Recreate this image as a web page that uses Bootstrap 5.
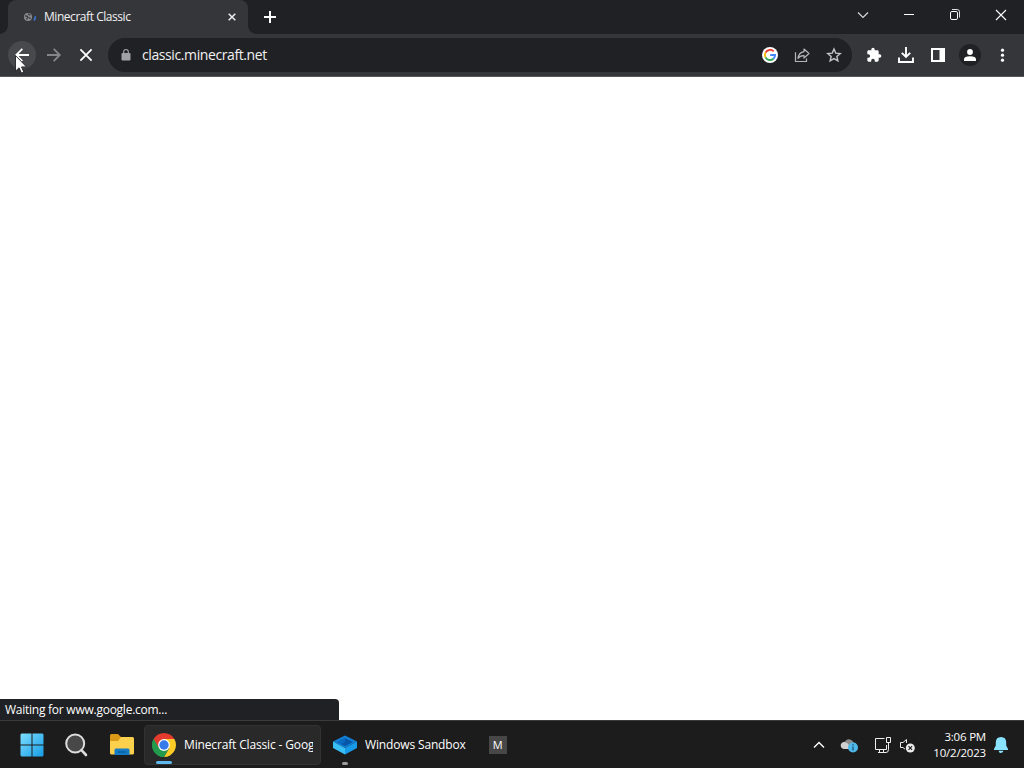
<!DOCTYPE html>
<html lang="en">
<head>
<meta charset="utf-8">
<title>Minecraft Classic</title>
<link href="https://cdn.jsdelivr.net/npm/bootstrap@5.3.0/dist/css/bootstrap.min.css" rel="stylesheet">
<style>
body{width:1024px;height:768px;overflow:hidden;font-family:"Open Sans","Noto Sans",sans-serif;font-size:12px;line-height:16px;color:#fff;background:#fff}
svg{display:block;flex:none;overflow:visible}
.strip{height:34px;background:#202124;padding-left:8px}
.tab{width:240px;height:34px;background:#35363a;border-radius:8px 8px 0 0}
.tab::before,.tab::after{content:"";position:absolute;bottom:0;width:8px;height:8px}
.tab::before{left:-8px;background:radial-gradient(circle at 0 0,#202124 7.5px,#35363a 8px)}
.tab::after{right:-8px;background:radial-gradient(circle at 100% 0,#202124 7.5px,#35363a 8px)}
.tab-name{font-size:12px;letter-spacing:-.45px;margin-left:8px;color:#f1f1f2}
.win{width:46px;height:29px}
.tools{height:43px;background:#35363a;padding:0 6px;border-bottom:1px solid #55565a}
.slot{width:32px;height:32px}
.hot{width:28px;height:28px;background:#48494d}
.omni{height:34px;background:#202124;margin:0 6px;padding:0 2px 0 12px}
.url{font-size:14px;letter-spacing:-.4px;margin-left:10px;color:#f1f1f2}
.avatar{width:22px;height:22px;background:#202124}
.pointer{left:15px;top:55px;z-index:5}
.status-tip{width:339px;height:21px;background:#202124;border-radius:0 4px 0 0;padding-left:5px;letter-spacing:-.25px}
.taskbar{height:48px;background:#1c1c1c;border-top:1px solid #3b3b3b;padding-left:10px}
.pin{width:44px;height:47px}
.task{height:40px;padding-left:8px}
.active-task{width:177px;margin-left:2px;background:#292929;border:1px solid #323232;border-radius:4px;padding-left:7px;padding-right:7px}
.task-name{margin-left:8px;letter-spacing:-.15px;white-space:nowrap;overflow:hidden}
.run-mark{bottom:0;height:3px;border-radius:2px}
.wide{left:11px;width:16px;background:#60b9ee}
.thin{left:17px;width:6px;background:#9b9b9b}
.letter{width:18px;height:18px;background:#474747;font-size:11px;margin-left:23px}
.clock{width:63px;font-size:11.5px;letter-spacing:-.2px}
</style>
<script src="https://cdn.jsdelivr.net/npm/bootstrap@5.3.0/dist/js/bootstrap.bundle.min.js"></script>
</head>
<body class="d-flex flex-column position-relative">
<header>
 <div class="strip d-flex align-items-start">
  <div class="tab position-relative d-flex align-items-center ps-3 pe-2">
   <svg width="12" height="12" viewBox="0 0 12 12"><circle cx="4" cy="6" r="4" fill="#8b8d91"/><path d="M1 4.8l2 .4 1 1-1 1-.3 1.5M4 2.7l1.5 1.2 1 0M5 6.8l1.8.6" fill="none" stroke="#35363a" stroke-width="1.3"/><path d="M11.3 5.2q0 2.8-1.3 4.3" fill="none" stroke="#3d75c5" stroke-width="1.8"/></svg>
   <span class="tab-name">Minecraft Classic</span>
   <svg class="ms-auto me-1" width="8" height="8" viewBox="0 0 8 8"><path d="M.7.7l6.6 6.6M7.3.7L.7 7.3" stroke="#eee" stroke-width="1.5"/></svg>
  </div>
  <svg class="mt-2 ms-3" width="12" height="18" viewBox="0 0 12 18"><path d="M6 3v12M0 9h12" stroke="#fff" stroke-width="2"/></svg>
  <div class="d-flex ms-auto">
   <div class="win d-flex align-items-center justify-content-center"><svg width="10" height="6" viewBox="0 0 10 6"><path d="M0 .5l5 5 5-5" fill="none" stroke="#ddd" stroke-width="1.1"/></svg></div>
   <div class="win d-flex align-items-center justify-content-center"><svg width="10" height="1" viewBox="0 0 10 1"><path d="M0 .5h10" stroke="#fff"/></svg></div>
   <div class="win d-flex align-items-center justify-content-center"><svg width="10" height="11" viewBox="0 0 10 11"><rect x=".5" y="2.5" width="7" height="8" rx="1.4" fill="none" stroke="#fff"/><path d="M2 .5h5.2q2.3 0 2.3 2.3V8.5" fill="none" stroke="#ddd"/></svg></div>
   <div class="win d-flex align-items-center justify-content-center"><svg width="10" height="10" viewBox="0 0 10 10"><path d="M0 0l10 10M10 0L0 10" stroke="#fff" stroke-width="1.1"/></svg></div>
  </div>
 </div>
 <div class="tools d-flex align-items-center">
  <div class="slot d-flex align-items-center justify-content-center"><div class="hot rounded-circle d-flex align-items-center justify-content-center"><svg width="14" height="14" viewBox="0 0 14 14"><path d="M14 7H1.5M7.3.8L1.2 7l6.1 6.2" fill="none" stroke="#fff" stroke-width="1.8"/></svg></div></div>
  <div class="slot d-flex align-items-center justify-content-center"><svg width="14" height="14" viewBox="0 0 14 14"><path d="M0 7h12.5M6.7.8L12.8 7l-6.1 6.2" fill="none" stroke="#85868a" stroke-width="1.8"/></svg></div>
  <div class="slot d-flex align-items-center justify-content-center"><svg width="12" height="12" viewBox="0 0 12 12"><path d="M.4.4l11.2 11.2M11.6.4L.4 11.6" stroke="#fff" stroke-width="1.8"/></svg></div>
  <div class="omni rounded-pill flex-grow-1 d-flex align-items-center">
   <svg class="ms-0" width="12" height="14" viewBox="0 0 12 14"><rect x="1.5" y="5" width="9" height="7.5" rx="1" fill="#a0a2a6"/><path d="M3.7 5.5V3.8a2.3 2.3 0 014.6 0v1.7" fill="none" stroke="#a0a2a6" stroke-width="1.2"/></svg>
   <span class="url">classic.minecraft.net</span>
   <div class="slot ms-auto d-flex align-items-center justify-content-center"><svg width="16" height="16" viewBox="0 0 16 16"><circle cx="8" cy="8" r="8" fill="#fff"/><g fill="none" stroke-width="2"><path d="M11.7 4.4A5.1 5.1 0 003.5 5.6" stroke="#ea4335"/><path d="M3.5 5.6a5.1 5.1 0 000 4.8" stroke="#fbbc05"/><path d="M3.5 10.4a5.1 5.1 0 007.9 1.4" stroke="#34a853"/><path d="M11.4 11.8Q13.1 10.2 13 8H8.2" stroke="#4285f4"/></g></svg></div>
   <div class="slot d-flex align-items-center justify-content-center"><svg width="16" height="16" viewBox="0 0 16 16"><path d="M1.5 5.2v9.3h11v-3" fill="none" stroke="#b5b6b8" stroke-width="1.2"/><path d="M10 2l5 4.5-5 4.5V8.6Q6.2 8.3 4 11.5 4.6 5.5 10 4.6z" fill="none" stroke="#b5b6b8" stroke-width="1.2" stroke-linejoin="round"/></svg></div>
   <div class="slot d-flex align-items-center justify-content-center"><svg width="16" height="16" viewBox="0 0 16 16"><path d="M8 2l1.75 4.1 4.5.4-3.4 3 1 4.4L8 11.6 4.15 13.9l1-4.4-3.4-3 4.5-.4z" fill="none" stroke="#c5c6c8" stroke-width="1.4"/></svg></div>
  </div>
  <div class="slot d-flex align-items-center justify-content-center"><svg width="16" height="16" viewBox="0 0 24 24"><path fill="#fff" d="M20.5 11H19V7c0-1.1-.9-2-2-2h-4V3.5a2.5 2.5 0 00-5 0V5H4c-1.1 0-2 .9-2 2v3.8h1.5a2.7 2.7 0 010 5.4H2V20c0 1.1.9 2 2 2h3.800v-1.500a2.700 2.700 0 015.400 0V22H17c1.100 0 2-.9 2-2v-4h1.500a2.500 2.500 0 000-5z"/></svg></div>
  <div class="slot d-flex align-items-center justify-content-center"><svg width="16" height="16" viewBox="0 0 16 16"><path d="M8 0v9.500M3.800 5.800L8 10l4.200-4.200M1 10.500V15h14v-4.500" fill="none" stroke="#fff" stroke-width="1.900"/></svg></div>
  <div class="slot d-flex align-items-center justify-content-center"><svg width="14" height="14" viewBox="0 0 14 14"><path fill="#fff" fill-rule="evenodd" d="M0 0h14v14H0zM2 2v10h6.500V2z"/></svg></div>
  <div class="slot d-flex align-items-center justify-content-center"><div class="avatar rounded-circle d-flex align-items-center justify-content-center"><svg width="12" height="12" viewBox="0 0 12 12"><circle cx="6" cy="3" r="2.900" fill="#fff"/><path d="M0 12v-1.700Q0 7.300 6 7.300t6 3V12z" fill="#fff"/></svg></div></div>
  <div class="slot d-flex align-items-center justify-content-center"><svg width="4" height="14" viewBox="0 0 4 14"><g fill="#fff"><circle cx="2.500" cy="2.200" r="1.600"/><circle cx="2.500" cy="7.200" r="1.600"/><circle cx="2.500" cy="12.200" r="1.600"/></g></svg></div>
 </div>
</header>
<svg class="pointer position-absolute" width="12" height="19" viewBox="0 0 12 19"><path d="M.5.5v15.700l3.600-3.400 2.300 5.300 2.400-1-2.300-5.200h5z" fill="#fff" stroke="#222" stroke-width=".9"/></svg>
<main class="flex-grow-1 d-flex align-items-end bg-white">
 <div class="status-tip d-flex align-items-center">Waiting for www.google.com...</div>
</main>
<footer class="taskbar d-flex align-items-center">
 <div class="pin d-flex align-items-center justify-content-center"><svg width="24" height="24" viewBox="0 0 24 24"><defs><linearGradient id="tiles" x1="0" y1="0" x2="24" y2="24" gradientUnits="userSpaceOnUse"><stop stop-color="#7fe0ff"/><stop offset="1" stop-color="#149be6"/></linearGradient></defs><path fill="url(#tiles)" d="M1.500.5h10v11h-11v-10zM12.500.5h10l1 1v10h-11zM.5 12.500h11v11h-10l-1-1zM12.500 12.500h11v10l-1 1h-10z"/></svg></div>
 <div class="pin d-flex align-items-center justify-content-center"><svg width="24" height="24" viewBox="0 0 24 24"><circle cx="11.200" cy="10.500" r="9" fill="#484848" stroke="#ddd" stroke-width="2"/><path d="M17.500 17.200l4.500 4.800" stroke="#ddd" stroke-width="2.600" stroke-linecap="round"/></svg></div>
 <div class="pin d-flex align-items-center justify-content-center ms-0"><svg class="ms-1" width="24" height="24" viewBox="0 0 24 24"><path d="M0 8V2.500Q0 1 1.500 1H8l3 3h8v5H0z" fill="#d99a17"/><path d="M0 8h8l3-4h11.500Q24 4 24 5.500V20q0 1.500-1.500 1.500h-21Q0 21.500 0 20z" fill="#fbd04c"/><path d="M4.500 22v-5q0-1.500 1.500-1.500h12q1.500 0 1.500 1.500v5z" fill="#157bc4"/><path d="M8 19h8" stroke="#0c5c9c" stroke-width="1.300"/></svg></div>
 <div class="task active-task position-relative d-flex align-items-center">
  <svg width="24" height="24" viewBox="0 0 24 24"><path d="M12 12L1.610 6A12 12 0 0122.390 6z" fill="#e33b2e"/><path d="M12 12l0 12A12 12 0 011.610 6z" fill="#249b4c"/><path d="M12 12V6h10.390A12 12 0 0112 24l5.200-9z" fill="#fccb25"/><path d="M1.610 6L12 6v6l-5.200 3z" fill="#e33b2e"/><path d="M1.610 6L6.800 15 12 18l5.200-3L12 24A12 12 0 011.610 6z" fill="#249b4c"/><circle cx="12" cy="12" r="5.900" fill="#fff"/><circle cx="12" cy="12" r="4.700" fill="#367be8"/></svg>
  <span class="task-name">Minecraft Classic - Google Chrome</span>
  <i class="run-mark wide position-absolute"></i>
 </div>
 <div class="task position-relative d-flex align-items-center ms-1">
  <svg class="ms-0" width="24" height="24" viewBox="0 0 24 24"><path d="M12 2.500l12 6L12 15 0 8.500z" fill="#1180d5"/><path d="M12 5l8 4-8 4.300L4 9z" fill="#0755a7"/><path d="M4 9l8-4v4l-4 2.200z" fill="#086bc1"/><path d="M0 8.500L12 15v6.500L0 15z" fill="#39bff5"/><path d="M24 8.500L12 15v6.500L24 15z" fill="#179be8"/></svg>
  <span class="task-name">Windows Sandbox</span>
  <i class="run-mark thin position-absolute"></i>
 </div>
 <div class="letter d-flex align-items-center justify-content-center">M</div>
 <div class="ms-auto d-flex align-items-center pe-3">
  <svg width="12" height="8" viewBox="0 0 12 8"><path d="M1 6.500l5-5 5 5" fill="none" stroke="#fff" stroke-width="1.400"/></svg>
  <svg class="ms-3" width="18" height="16" viewBox="0 0 18 16"><path d="M4 12a3.800 3.800 0 010-7.500Q6 1.500 9 2.400q2.500.4 3.500 3Q16 6 16 9v3z" fill="#8d8d8d"/><path d="M4 12a3.500 3.500 0 110-6.800q3 .5 4 3V12z" fill="#d0d0d0"/><circle cx="12" cy="10.500" r="5" fill="#4fb9ea"/><path d="M12 9.500v4M12 7.200v1.200" stroke="#164c6c" stroke-width="1.200"/></svg>
  <svg class="ms-3" width="16" height="16" viewBox="0 0 16 16"><path d="M9.500 1.500h-9v11h11v-4.500M4.500 12.500v3M8.500 12.500v3M3 15.500h8M11.500.5h4v5h-4zM13.500 5.500v7q0 3-2.500 3" fill="none" stroke="#eee"/></svg>
  <svg class="ms-2" width="16" height="16" viewBox="0 0 16 16"><path d="M7.500 6V2.500L4 5.500H1.500v5H4l2 1.700" fill="none" stroke="#eee"/><circle cx="11.300" cy="11" r="4.500" fill="#eee"/><path d="M9.500 9.200l3.600 3.600M13.100 9.200l-3.600 3.600" stroke="#1c1c1c" stroke-width="1.100"/></svg>
  <div class="clock text-end ms-2">3:06 PM<br>10/2/2023</div>
  <svg class="ms-2" width="14" height="16" viewBox="0 0 14 16"><path d="M7 0q5 .2 5.200 5v3.500L14 12v1H0v-1l1.800-3.500V5Q2 .2 7 0zM4.500 13.800h5Q9 15.800 7 16t-2.500-2.200z" fill="#8be4ff"/></svg>
 </div>
</footer>
</body>
</html>
